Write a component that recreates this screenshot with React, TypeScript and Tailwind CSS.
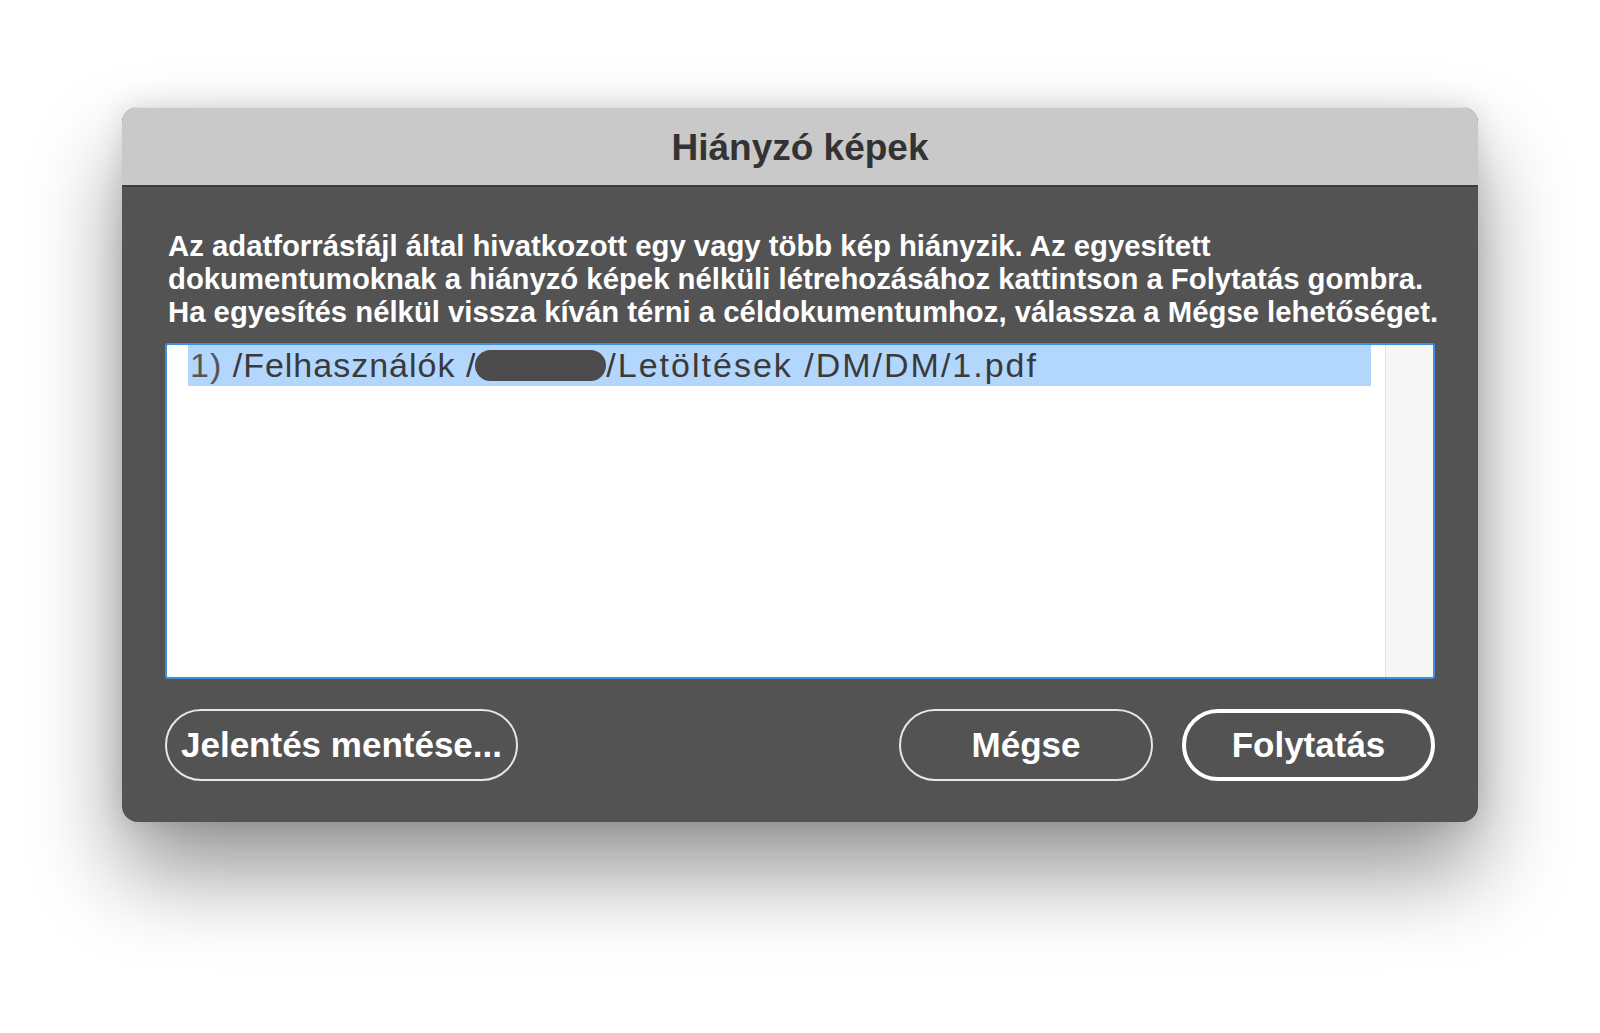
function MissingImagesDialog() {
  const lines = [
    "Az adatforrásfájl által hivatkozott egy vagy több kép hiányzik. Az egyesített",
    "dokumentumoknak a hiányzó képek nélküli létrehozásához kattintson a Folytatás gombra.",
    "Ha egyesítés nélkül vissza kíván térni a céldokumentumhoz, válassza a Mégse lehetőséget.",
  ];
  return (
    <div className="w-[1356px] h-[715px] flex flex-col rounded-[16px] overflow-hidden bg-[#535353] shadow-[0_50px_90px_rgba(0,0,0,0.42),0_0_28px_rgba(0,0,0,0.12)]">
      <div className="h-[80px] shrink-0 flex items-center justify-center bg-[#c9c9c9] border-t border-[#e0e0e0] border-b-2 border-b-[#3c3c3c]">
        <div className="text-[37px] font-bold text-[#333333] leading-none pt-[2px]">Hiányzó képek</div>
      </div>
      <div className="flex-1 flex flex-col pt-[42px] px-[43px]">
        <div className="pl-[3px] text-[29.3px] leading-[33px] font-bold text-white whitespace-nowrap">
          {lines.map((l, i) => (
            <div key={i}>{l}</div>
          ))}
        </div>
        <div className="mt-[15px] h-[336px] flex bg-white border-2 border-[#3f8fe0] rounded-[3px]">
          <div className="flex-1 pl-[21px] pr-[14px]">
            <div className="h-[41px] flex items-center pl-[2px] bg-[#b3d6fd] text-[34px] text-[#3a3a3a] whitespace-pre">
              <span className="tracking-[1px]">
                <span className="text-[#555555]">1)</span> /Felhasználók /
              </span>
              <span className="w-[131px] h-[31px] rounded-full bg-[#4b4b4b] -ml-[1px]"></span>
              <span className="tracking-[2px]">/Letöltések /DM/DM/1.pdf</span>
            </div>
          </div>
          <div className="w-[48px] bg-[#f6f6f6] border-l border-[#e4e4e4]"></div>
        </div>
        <div className="mt-[30px] flex items-center">
          <button className="w-[353px] h-[72px] rounded-full border-2 border-[#e6e6e6] text-[35px] font-bold text-white">
            Jelentés mentése...
          </button>
          <div className="flex-1"></div>
          <button className="w-[254px] h-[72px] rounded-full border-2 border-[#e6e6e6] text-[35px] font-bold text-white">
            Mégse
          </button>
          <button className="ml-[29px] w-[253px] h-[72px] rounded-full border-[4px] border-white text-[35px] font-bold text-white">
            Folytatás
          </button>
        </div>
      </div>
    </div>
  );
}

export default function App() {
  return (
    <div className="w-[1600px] h-[1033px] bg-white flex justify-center pt-[107px] font-['Liberation_Sans',Arial,sans-serif]">
      <MissingImagesDialog />
    </div>
  );
}
